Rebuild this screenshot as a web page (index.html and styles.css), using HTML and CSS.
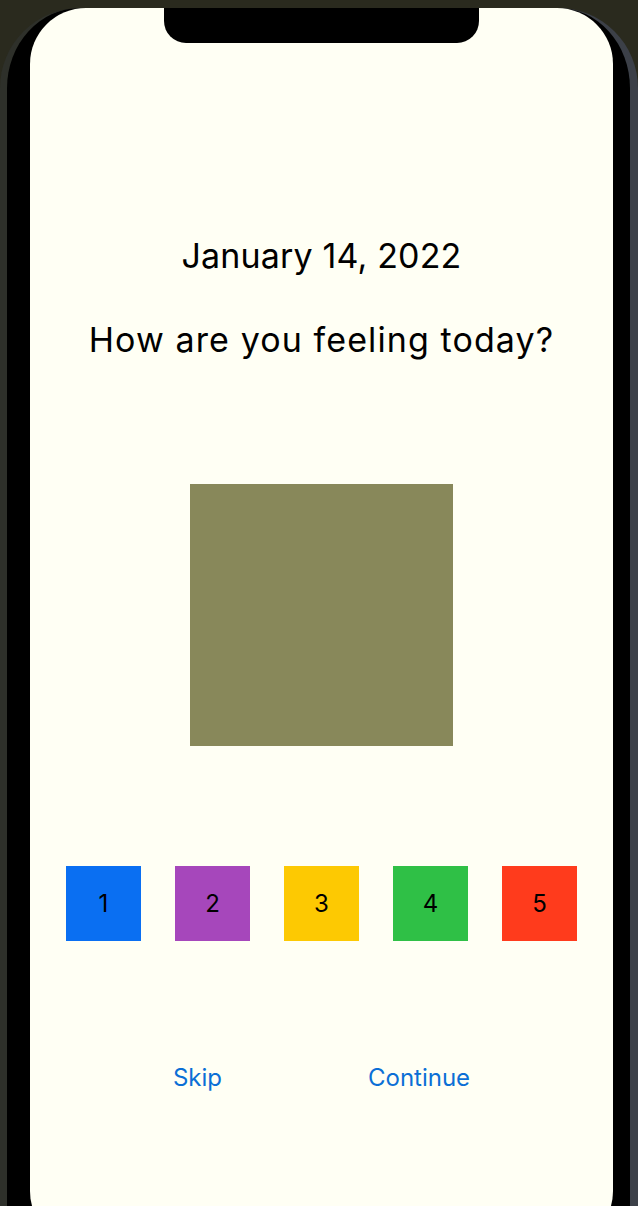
FILE: index.html
```html
<!DOCTYPE html>
<html lang="en">
<head>
<meta charset="utf-8">
<title>Mood check-in</title>
<link rel="stylesheet" href="styles.css">
</head>
<body>
<div class="phone">
  <div class="screen">
    <div class="notch"></div>
    <h1 class="date">January 14, 2022</h1>
    <h2 class="question">How are you feeling today?</h2>
    <div class="preview"></div>
    <div class="ratings">
      <button class="rate rate-1">1</button>
      <button class="rate rate-2">2</button>
      <button class="rate rate-3">3</button>
      <button class="rate rate-4">4</button>
      <button class="rate rate-5">5</button>
    </div>
    <div class="actions">
      <button class="link">Skip</button>
      <button class="link">Continue</button>
    </div>
  </div>
</div>
</body>
</html>
```
FILE: styles.css
```css
html, body {
  margin: 0;
  padding: 0;
}
body {
  width: 638px;
  height: 1206px;
  overflow: hidden;
  background: #2a2a1e;
  font-family: Inter, "Noto Sans", "Liberation Sans", sans-serif;
}
.phone {
  margin: 8px 0 0 0;
  padding: 0 17px 0 23px;
  background: #000;
  border-left: 7px solid #2e302a;
  border-right: 8px solid #3c4048;
  border-radius: 80px 80px 0 0;
  height: 1260px;
}
.screen {
  position: relative;
  width: 583px;
  height: 1239px;
  background: #fffff4;
  border-radius: 56px;
  display: flex;
  flex-direction: column;
  align-items: center;
}
.notch {
  position: absolute;
  top: 0;
  left: 134px;
  width: 315px;
  height: 35px;
  background: #000;
  border-radius: 0 0 22px 22px;
}
.date, .question {
  margin: 0;
  font-weight: 400;
  font-size: 34px;
  line-height: 40px;
  color: #000;
  white-space: nowrap;
}
.date {
  margin-top: 228px;
  letter-spacing: 0.15px;
}
.question {
  margin-top: 44px;
  letter-spacing: 1.1px;
}
.preview {
  margin-top: 124px;
  width: 263px;
  height: 262px;
  background: #88885a;
}
.ratings {
  margin-top: 120px;
  display: flex;
  gap: 34px;
}
.rate {
  width: 75px;
  height: 75px;
  border: 0;
  padding: 0;
  font-family: inherit;
  font-size: 24px;
  color: #000;
  display: flex;
  align-items: center;
  justify-content: center;
}
.rate-1 { background: #0a6ff2; }
.rate-2 { background: #a647bb; }
.rate-3 { background: #fdc902; }
.rate-4 { background: #2fc046; }
.rate-5 { background: #ff3b1c; }
.actions {
  margin-top: 123px;
  display: flex;
  gap: 146px;
}
.link {
  border: 0;
  padding: 0;
  background: none;
  font-family: inherit;
  font-size: 24px;
  line-height: 28px;
  color: #0b6fd6;
}
```
